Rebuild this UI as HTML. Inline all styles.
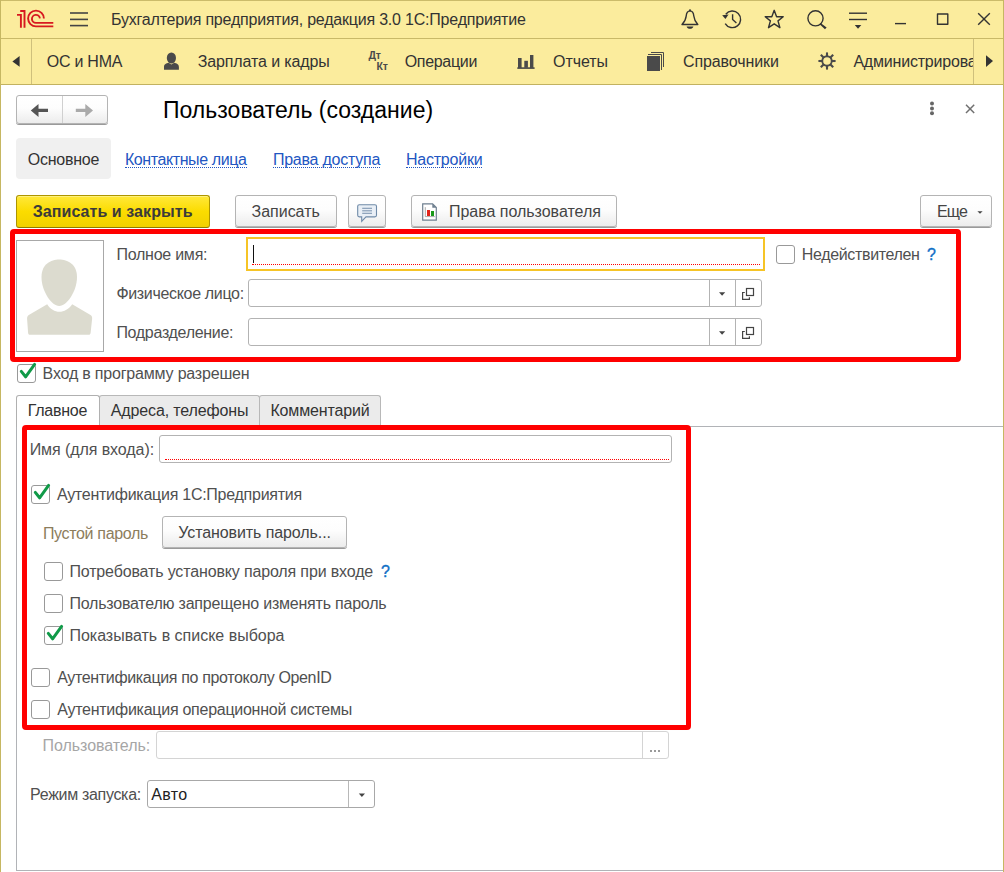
<!DOCTYPE html>
<html><head><meta charset="utf-8">
<style>
*{box-sizing:border-box;margin:0;padding:0}
html,body{width:1004px;height:872px;overflow:hidden;background:#fff;font-family:"Liberation Sans",sans-serif}
.a{position:absolute}
.t{position:absolute;line-height:30px;height:30px;white-space:nowrap;font-family:"Liberation Sans",sans-serif}
.btn{position:absolute;border:1px solid #b4b4b4;border-radius:3px;background:linear-gradient(#ffffff 0%,#fdfdfd 45%,#ececec 100%);box-shadow:0 1px 0 #9a9a9a}
.cb{position:absolute;width:19px;height:19px;border:1.5px solid #999999;border-radius:3px;background:#fff}
.inp{position:absolute;border:1px solid #b3b3b3;border-radius:3px;background:#fff}
.vl{position:absolute;width:1px;background:#b3b3b3}
</style></head><body>
<!-- title bar -->
<div class="a" style="left:0;top:0;width:1004px;height:84px;background:#fbec9d"></div>
<div class="a" style="left:0;top:0;width:1004px;height:1px;background:#cbbb6a"></div>
<div class="a" style="left:0;top:38px;width:1004px;height:1px;background:#c9b968"></div>
<div class="a" style="left:0;top:84px;width:1004px;height:1px;background:#c2b260"></div>
<div class="a" style="left:31px;top:39px;width:1px;height:45px;background:#cfc07c"></div>
<div class="a" style="left:973px;top:39px;width:1px;height:45px;background:#cfc07c"></div>

<!-- 1C logo -->
<svg class="a" style="left:0;top:0" width="60" height="38" viewBox="0 0 60 38">
 <g fill="none" stroke="#d71920" stroke-width="1.9">
  <polyline points="17,14.9 20.9,14.9 20.9,27.8"/>
  <polyline points="20.2,11 24.5,11 24.5,27.8"/>
  <path d="M43.9,18.4 A7.9,7.9 0 1 0 36,26.4 L53.3,26.4"/>
  <path d="M39.9,18.4 A4,4 0 1 0 36,22.9 L53.3,22.9"/>
 </g>
</svg>
<!-- hamburger -->
<svg class="a" style="left:68px;top:8px" width="22" height="22" viewBox="0 0 22 22">
 <g stroke="#444" stroke-width="1.6"><line x1="2" y1="5" x2="20" y2="5"/><line x1="2" y1="11.4" x2="20" y2="11.4"/><line x1="2" y1="17.6" x2="20" y2="17.6"/></g>
</svg>
<!-- title icons -->
<svg class="a" style="left:670px;top:0" width="334" height="38" viewBox="670 0 334 38">
 <g fill="none" stroke="#333" stroke-width="1.4" stroke-linejoin="round">
  <!-- bell -->
  <path d="M682,24.5 L697.8,24.5 C695.5,22 694.2,20 693.8,16 C693.5,12.5 692.6,11 690,10.9 C687.4,11 686.5,12.5 686.2,16 C685.8,20 684.5,22 682,24.5 Z"/>
  <!-- history -->
  <path d="M725.8,14.2 A8.3,8.3 0 1 1 725.2,23.6"/>
  <path d="M732.6,14.3 L732.6,19.6 L736.4,23"/>
  <!-- star -->
  <path d="M774.2,10.3 L776.6,16.7 L783.2,16.8 L778,20.9 L779.9,27.7 L774.2,23.8 L768.5,27.7 L770.4,20.9 L765.2,16.8 L771.8,16.7 Z"/>
  <!-- search -->
  <circle cx="815.5" cy="18.3" r="7.6"/>
  <!-- filter -->
  <line x1="849" y1="13.2" x2="867" y2="13.2"/>
  <line x1="849" y1="19.5" x2="867" y2="19.5"/>
  <!-- min/max/close -->
  <line x1="895" y1="23.6" x2="906" y2="23.6"/>
  <rect x="937.5" y="14" width="10.3" height="10.3"/>
  <line x1="978.2" y1="13.2" x2="989.8" y2="24.8"/>
  <line x1="989.8" y1="13.2" x2="978.2" y2="24.8"/>
 </g>
 <g fill="#333">
  <path d="M686.6,26.4 L693.4,26.4 C693,28 691.6,28.8 690,28.8 C688.4,28.8 687,28 686.6,26.4 Z"/>
  <circle cx="690" cy="10.2" r="1"/>
  <path d="M722.2,15.2 L728.6,14.6 L725.4,19 Z"/>
  <path d="M820.6,22.9 L826.6,27.6 L825,29.2 L819.6,24.2 Z" />
  <path d="M854.8,25 L861.3,25 L858,28.8 Z"/>
 </g>
</svg>
<!-- nav arrows -->
<svg class="a" style="left:0;top:38px" width="32" height="46"><path d="M19.6,18 L19.6,28.8 L12.4,23.4 Z" fill="#333"/></svg>
<svg class="a" style="left:974px;top:38px" width="30" height="46"><path d="M12,17.2 L12,28.9 L19,23 Z" fill="#333"/></svg>
<!-- nav icons -->
<svg class="a" style="left:150px;top:38px" width="850" height="46" viewBox="150 38 850 46">
 <g fill="#4a4a4a">
  <!-- person -->
  <ellipse cx="171.4" cy="58" rx="4.6" ry="5.6"/>
  <path d="M164,69.8 L164,67 C164,64 166.5,63.2 168.5,62.8 L171.4,64.6 L174.3,62.8 C176.3,63.2 178.9,64 178.9,67 L178.9,69.8 Z"/>
  <!-- chart -->
  <rect x="517.3" y="67.3" width="17.3" height="1.6"/>
  <rect x="518" y="58" width="3.6" height="10"/>
  <rect x="524.3" y="60.8" width="3.6" height="7"/>
  <rect x="530" y="55" width="3.4" height="13"/>
  <!-- books -->
  <rect x="647" y="56" width="13" height="15"/>
  <path d="M648,54.5 H661.5 V70" fill="none" stroke="#4a4a4a" stroke-width="1"/>
  <path d="M651,52.5 H663.5 V67" fill="none" stroke="#4a4a4a" stroke-width="1"/>
  <!-- gear -->
  <g transform="translate(827 61)">
   <circle r="4.75" fill="none" stroke="#4a4a4a" stroke-width="1.9"/>
   <g stroke="#4a4a4a" stroke-width="2.1">
    <line x1="0" y1="-8.6" x2="0" y2="-4.5"/><line x1="0" y1="8.6" x2="0" y2="4.5"/>
    <line x1="-8.6" y1="0" x2="-4.5" y2="0"/><line x1="8.6" y1="0" x2="4.5" y2="0"/>
    <line x1="-6.2" y1="-6.2" x2="-3.2" y2="-3.2"/><line x1="6.2" y1="6.2" x2="3.2" y2="3.2"/>
    <line x1="-6.2" y1="6.2" x2="-3.2" y2="3.2"/><line x1="6.2" y1="-6.2" x2="3.2" y2="-3.2"/>
   </g>
  </g>
 </g>
 <g fill="#4a4a4a" font-family="Liberation Sans" font-weight="700" font-size="10.5">
  <text x="368.4" y="58.8">Дт</text>
  <text x="376.4" y="69.9">Кт</text>
 </g>
</svg>
<!-- clipped nav text -->
<div class="a" style="left:32px;top:39px;width:941px;height:45px;overflow:hidden">
 <div class="t" style="left:821.4px;top:7.8px;font-size:16px;letter-spacing:-0.2px;color:#333">Администрирование</div>
</div>

<!-- back/forward -->
<div class="btn" style="left:16px;top:95px;width:92px;height:29px"></div>
<div class="a" style="left:62px;top:96px;width:1px;height:27px;background:#d0d0d0"></div>
<svg class="a" style="left:16px;top:95px" width="92" height="29" viewBox="16 95 92 29">
 <path d="M30.8,110.5 L38.5,104 L38.5,108.8 L48,108.8 L48,112 L38.5,112 L38.5,117 Z" fill="#555"/>
 <path d="M93,110.5 L85.3,104 L85.3,108.8 L75.8,108.8 L75.8,112 L85.3,112 L85.3,117 Z" fill="#aaa"/>
</svg>
<!-- kebab & close -->
<svg class="a" style="left:920px;top:95px" width="64" height="30" viewBox="920 95 64 30">
 <g fill="#666"><circle cx="932" cy="103.6" r="2"/><circle cx="932" cy="108.4" r="2"/><circle cx="932" cy="113.3" r="2"/></g>
 <g stroke="#707070" stroke-width="1.5"><line x1="966" y1="104.8" x2="974.2" y2="113"/><line x1="974.2" y1="104.8" x2="966" y2="113"/></g>
</svg>

<!-- top tabs -->
<div class="a" style="left:16px;top:138px;width:95px;height:41px;background:#f0f0f0;border-radius:4px"></div>
<div class="a" style="left:125px;top:167px;width:122px;height:1px;border-top:1px dotted #2256c2"></div>
<div class="a" style="left:273px;top:167px;width:107px;height:1px;border-top:1px dotted #2256c2"></div>
<div class="a" style="left:406px;top:167px;width:76px;height:1px;border-top:1px dotted #2256c2"></div>

<!-- toolbar -->
<div class="a" style="left:16px;top:195px;width:194px;height:33px;border:1px solid #ad9500;border-bottom-color:#8f7b00;border-radius:3px;background:linear-gradient(#ffe83a,#fbdc00 50%,#f1d100);box-shadow:inset 0 1px 0 #fff07a"></div>
<div class="btn" style="left:235px;top:195px;width:102px;height:32px"></div>
<div class="btn" style="left:348px;top:195px;width:38px;height:32px"></div>
<svg class="a" style="left:350px;top:198px" width="40" height="30" viewBox="350 198 40 30">
 <path d="M359.3,204.7 L374.9,204.7 Q376.5,204.7 376.5,206.3 L376.5,215.3 Q376.5,216.9 374.9,216.9 L366,216.9 L361.7,221.3 L361.7,216.9 L359.3,216.9 Q357.7,216.9 357.7,215.3 L357.7,206.3 Q357.7,204.7 359.3,204.7 Z" fill="#e9eff6" stroke="#6f8aa8" stroke-width="1.1"/>
 <g stroke="#7f97b2" stroke-width="1.1"><line x1="362.2" y1="208.3" x2="372" y2="208.3"/><line x1="362.2" y1="210.8" x2="372" y2="210.8"/><line x1="362.2" y1="213.3" x2="372" y2="213.3"/></g>
</svg>
<div class="btn" style="left:411px;top:195px;width:206px;height:32px"></div>
<svg class="a" style="left:415px;top:198px" width="30" height="30" viewBox="415 198 30 30">
 <path d="M422.7,203.8 L432.6,203.8 L436.3,207.5 L436.3,220.2 L422.7,220.2 Z" fill="#fff" stroke="#6e7f8f" stroke-width="1.2"/>
 <path d="M432.3,203.8 L436.3,207.8 L432.3,207.8 Z" fill="#6e7f8f"/>
 <path d="M425.3,207.2 L425.3,216.6 L434.8,216.6" fill="none" stroke="#888" stroke-width="0.7"/>
 <rect x="427" y="210" width="3" height="6" fill="#e2231a"/>
 <rect x="431" y="211" width="3" height="5" fill="#1a9a1a"/>
</svg>
<div class="btn" style="left:920px;top:195px;width:72px;height:32px"></div>
<svg class="a" style="left:970px;top:205px" width="20" height="15"><path d="M7.4,6.3 L12.6,6.3 L10,8.8 Z" fill="#444"/></svg>

<!-- red frame 1 -->
<div class="a" style="left:10px;top:229px;width:951px;height:133px;border:5px solid #ff0000;border-radius:4px"></div>
<!-- photo -->
<div class="a" style="left:16px;top:240px;width:88px;height:112px;border:1px solid #a8a8a8;background:#fff"></div>
<svg class="a" style="left:16px;top:240px" width="88" height="112" viewBox="16 240 88 112">
 <g fill="#dcdbcf">
  <path d="M59.2,259.4 C67.5,259.4 77,264 77,277 C77,291 67,306 59.2,306 C51.4,306 41.5,291 41.5,277 C41.5,264 50.9,259.4 59.2,259.4 Z"/>
  <path d="M47.2,304.2 C50,309 55,311.8 59.4,311.8 C64,311.8 69,309 72.2,304.2 L90.5,315 C92,316 92.3,317 92.1,319 L90.6,333 C90.4,334.4 89.6,334.8 88.4,334.8 L30.2,334.8 C29,334.8 28.3,334.4 28.1,333 L27.1,319 C27,317 27.4,316 28.8,315 Z"/>
 </g>
</svg>
<!-- inputs -->
<div class="a" style="left:246px;top:237px;width:519px;height:34px;border:2px solid #f6c426;background:#fff"></div>
<div class="a" style="left:252.5px;top:245px;width:1px;height:18px;background:#111"></div>
<div class="a" style="left:252px;top:264px;width:508px;height:1px;border-top:1px dotted #ff0000"></div>
<div class="inp" style="left:248px;top:279px;width:514px;height:28px"></div>
<div class="vl" style="left:709px;top:280px;height:26px"></div>
<div class="vl" style="left:735px;top:280px;height:26px"></div>
<div class="inp" style="left:248px;top:318px;width:514px;height:28px"></div>
<div class="vl" style="left:709px;top:319px;height:26px"></div>
<div class="vl" style="left:735px;top:319px;height:26px"></div>
<svg class="a" style="left:700px;top:279px" width="70" height="70" viewBox="700 279 70 70">
 <g fill="#444"><path d="M719,292.3 L725.2,292.3 L722.1,295.8 Z"/><path d="M719,331.3 L725.2,331.3 L722.1,334.8 Z"/></g>
 <g fill="none" stroke="#444" stroke-width="1.2">
  <path d="M744.8,292.5 H742.6 V299.3 H749.4 V297.2"/><rect x="746.5" y="288.5" width="7" height="7"/>
  <path d="M744.8,331.5 H742.6 V338.3 H749.4 V336.2"/><rect x="746.5" y="327.5" width="7" height="7"/>
 </g>
</svg>
<div class="cb" style="left:776px;top:245px"></div>

<!-- login allowed -->
<div class="cb" style="left:17px;top:364px"></div>
<svg class="a" style="left:16px;top:360px" width="24" height="24" viewBox="16 360 24 24"><path d="M21.3,371.4 L25.6,376.8 L34.6,364.4" fill="none" stroke="#109a48" stroke-width="3" stroke-linecap="round" stroke-linejoin="round"/></svg>

<!-- bottom tabs -->
<div class="a" style="left:16px;top:426px;width:988px;height:445px;border:1px solid #b1b3b7;border-right:none"></div>
<div class="a" style="left:99px;top:395px;width:161px;height:32px;background:#ebebeb;border:1px solid #b8b8b8;border-bottom:none;border-radius:3px 3px 0 0"></div>
<div class="a" style="left:259px;top:395px;width:122px;height:32px;background:#ebebeb;border:1px solid #b8b8b8;border-bottom:none;border-radius:3px 3px 0 0"></div>
<div class="a" style="left:16px;top:395px;width:84px;height:32px;background:#fff;border:1px solid #b0b0b0;border-bottom:none;border-radius:3px 3px 0 0"></div>

<!-- red frame 2 -->
<div class="a" style="left:22px;top:425px;width:669px;height:305px;border:5px solid #ff0000;border-radius:4px"></div>
<div class="inp" style="left:159px;top:435px;width:513px;height:28px"></div>
<div class="a" style="left:165px;top:459px;width:504px;height:1px;border-top:1px dotted #ff0000"></div>
<div class="cb" style="left:31px;top:485px"></div>
<svg class="a" style="left:30px;top:480px" width="24" height="24" viewBox="30 480 24 24"><path d="M35.3,492.4 L39.6,497.8 L48.6,485.4" fill="none" stroke="#109a48" stroke-width="3" stroke-linecap="round" stroke-linejoin="round"/></svg>
<div class="btn" style="left:162px;top:516px;width:185px;height:32px"></div>
<div class="cb" style="left:44px;top:562px"></div>
<div class="cb" style="left:44px;top:594px"></div>
<div class="cb" style="left:44px;top:626px"></div>
<svg class="a" style="left:43px;top:621px" width="24" height="24" viewBox="43 621 24 24"><path d="M48.3,633.4 L52.6,638.8 L61.6,626.4" fill="none" stroke="#109a48" stroke-width="3" stroke-linecap="round" stroke-linejoin="round"/></svg>
<div class="cb" style="left:31px;top:668px"></div>
<div class="cb" style="left:31px;top:700px"></div>

<!-- user field -->
<div class="inp" style="left:156px;top:731px;width:513px;height:28px;border-color:#d4d4d4"></div>
<div class="vl" style="left:642px;top:732px;height:26px;background:#d4d4d4"></div>
<svg class="a" style="left:645px;top:745px" width="20" height="10" viewBox="645 745 20 10"><g fill="#9a9a9a"><rect x="650" y="750" width="2" height="2"/><rect x="654" y="750" width="2" height="2"/><rect x="658" y="750" width="2" height="2"/></g></svg>
<!-- mode select -->
<div class="inp" style="left:147px;top:780px;width:228px;height:28px;border-color:#a8a8a8"></div>
<div class="vl" style="left:348px;top:781px;height:26px;background:#b8b8b8"></div>
<svg class="a" style="left:350px;top:785px" width="24" height="20" viewBox="350 785 24 20"><path d="M358.8,793.6 L365,793.6 L361.9,796.9 Z" fill="#444"/></svg>

<div class="t" style="left:111.0px;top:4.7px;font-size:16px;font-weight:400;letter-spacing:-0.206px;color:#333333;">Бухгалтерия предприятия, редакция 3.0 1С:Предприятие</div>
<div class="t" style="left:46.8px;top:47.0px;font-size:16px;font-weight:400;letter-spacing:-0.257px;color:#333333;">ОС и НМА</div>
<div class="t" style="left:197.7px;top:47.0px;font-size:16px;font-weight:400;letter-spacing:-0.113px;color:#333333;">Зарплата и кадры</div>
<div class="t" style="left:404.7px;top:47.0px;font-size:16px;font-weight:400;letter-spacing:-0.314px;color:#333333;">Операции</div>
<div class="t" style="left:553.0px;top:47.0px;font-size:16px;font-weight:400;letter-spacing:-0.04px;color:#333333;">Отчеты</div>
<div class="t" style="left:683.0px;top:47.0px;font-size:16px;font-weight:400;letter-spacing:-0.1px;color:#333333;">Справочники</div>
<div class="t" style="left:163.0px;top:95.4px;font-size:23px;font-weight:400;letter-spacing:0.014px;color:#000000;">Пользователь (создание)</div>
<div class="t" style="left:27.7px;top:145.4px;font-size:16px;font-weight:400;letter-spacing:-0.243px;color:#333333;">Основное</div>
<div class="t" style="left:124.9px;top:145.0px;font-size:16px;font-weight:400;letter-spacing:-0.407px;color:#2256c2;">Контактные лица</div>
<div class="t" style="left:272.9px;top:145.0px;font-size:16px;font-weight:400;letter-spacing:-0.225px;color:#2256c2;">Права доступа</div>
<div class="t" style="left:405.9px;top:145.0px;font-size:16px;font-weight:400;letter-spacing:-0.212px;color:#2256c2;">Настройки</div>
<div class="t" style="left:32.7px;top:197.1px;font-size:16px;font-weight:700;letter-spacing:0.071px;color:#3b3b3b;">Записать и закрыть</div>
<div class="t" style="left:251.6px;top:196.5px;font-size:16px;font-weight:400;letter-spacing:-0.029px;color:#444444;">Записать</div>
<div class="t" style="left:449.0px;top:196.5px;font-size:16px;font-weight:400;letter-spacing:-0.024px;color:#444444;">Права пользователя</div>
<div class="t" style="left:936.9px;top:196.6px;font-size:16px;font-weight:400;letter-spacing:-0.8px;color:#444444;">Еще</div>
<div class="t" style="left:116.4px;top:239.9px;font-size:16px;font-weight:400;letter-spacing:-0.24px;color:#505050;">Полное имя:</div>
<div class="t" style="left:116.4px;top:278.7px;font-size:16px;font-weight:400;letter-spacing:-0.327px;color:#505050;">Физическое лицо:</div>
<div class="t" style="left:116.4px;top:317.6px;font-size:16px;font-weight:400;letter-spacing:-0.3px;color:#505050;">Подразделение:</div>
<div class="t" style="left:801.8px;top:239.9px;font-size:16px;font-weight:400;letter-spacing:-0.346px;color:#505050;">Недействителен</div>
<div class="t" style="left:927.1px;top:239.9px;font-size:16px;font-weight:400;letter-spacing:0px;color:#0f6fc6;-webkit-text-stroke:0.35px #0f6fc6">?</div>
<div class="t" style="left:42.6px;top:359.2px;font-size:16px;font-weight:400;letter-spacing:-0.192px;color:#505050;">Вход в программу разрешен</div>
<div class="t" style="left:27.7px;top:396.1px;font-size:16px;font-weight:400;letter-spacing:-0.25px;color:#333333;">Главное</div>
<div class="t" style="left:110.8px;top:396.1px;font-size:16px;font-weight:400;letter-spacing:-0.133px;color:#333333;">Адреса, телефоны</div>
<div class="t" style="left:270.4px;top:396.1px;font-size:16px;font-weight:400;letter-spacing:-0.14px;color:#333333;">Комментарий</div>
<div class="t" style="left:29.7px;top:435.3px;font-size:16px;font-weight:400;letter-spacing:-0.08px;color:#505050;">Имя (для входа):</div>
<div class="t" style="left:56.9px;top:479.5px;font-size:16px;font-weight:400;letter-spacing:-0.257px;color:#505050;">Аутентификация 1С:Предприятия</div>
<div class="t" style="left:42.9px;top:519.2px;font-size:16px;font-weight:400;letter-spacing:-0.333px;color:#8c7d5c;">Пустой пароль</div>
<div class="t" style="left:178.3px;top:517.9px;font-size:16px;font-weight:400;letter-spacing:-0.095px;color:#444444;">Установить пароль...</div>
<div class="t" style="left:69.4px;top:556.8px;font-size:16px;font-weight:400;letter-spacing:-0.146px;color:#505050;">Потребовать установку пароля при входе</div>
<div class="t" style="left:381.1px;top:557.0px;font-size:16px;font-weight:400;letter-spacing:0px;color:#0f6fc6;-webkit-text-stroke:0.35px #0f6fc6">?</div>
<div class="t" style="left:69.4px;top:588.9px;font-size:16px;font-weight:400;letter-spacing:-0.214px;color:#505050;">Пользователю запрещено изменять пароль</div>
<div class="t" style="left:69.4px;top:621.0px;font-size:16px;font-weight:400;letter-spacing:-0.004px;color:#505050;">Показывать в списке выбора</div>
<div class="t" style="left:57.2px;top:662.9px;font-size:16px;font-weight:400;letter-spacing:-0.345px;color:#505050;">Аутентификация по протоколу OpenID</div>
<div class="t" style="left:57.2px;top:695.0px;font-size:16px;font-weight:400;letter-spacing:-0.262px;color:#505050;">Аутентификация операционной системы</div>
<div class="t" style="left:42.6px;top:731.2px;font-size:16px;font-weight:400;letter-spacing:-0.058px;color:#a6a6a6;">Пользователь:</div>
<div class="t" style="left:30.1px;top:780.0px;font-size:16px;font-weight:400;letter-spacing:-0.315px;color:#505050;">Режим запуска:</div>
<div class="t" style="left:151.2px;top:780.0px;font-size:16px;font-weight:400;letter-spacing:0.367px;color:#222222;">Авто</div>
<div class="a" style="left:0;top:0;width:1px;height:872px;background:#c6b762"></div>
<div class="a" style="left:1003px;top:0;width:1px;height:872px;background:#c6b762"></div>

</body></html>
